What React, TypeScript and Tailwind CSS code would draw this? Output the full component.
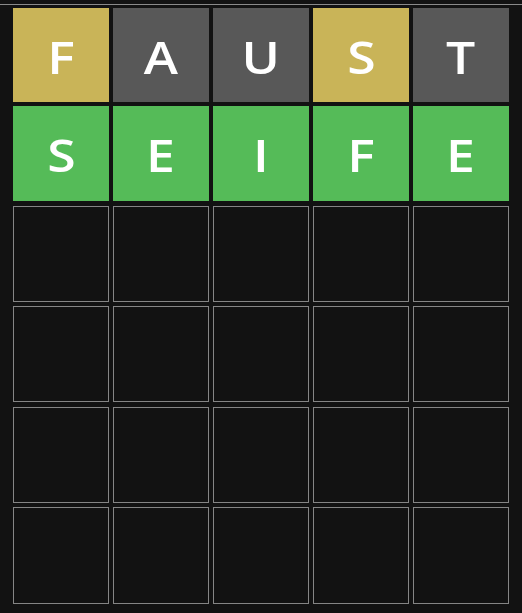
const rows: { letter: string; state: "present" | "absent" | "correct" }[][] = [
  [
    { letter: "F", state: "present" },
    { letter: "A", state: "absent" },
    { letter: "U", state: "absent" },
    { letter: "S", state: "present" },
    { letter: "T", state: "absent" },
  ],
  [
    { letter: "S", state: "correct" },
    { letter: "E", state: "correct" },
    { letter: "I", state: "correct" },
    { letter: "F", state: "correct" },
    { letter: "E", state: "correct" },
  ],
];

const stateClass = {
  present: "bg-[#c9b458]",
  absent: "bg-[#585858]",
  correct: "bg-[#55bb58]",
};

export default function App() {
  const cells = Array.from({ length: 30 }, (_, i) => {
    const r = Math.floor(i / 5);
    const c = i % 5;
    return rows[r]?.[c] ?? null;
  });

  return (
    <div className="w-[522px] h-[613px] bg-[#121212] overflow-hidden">
      <div className="pt-[4px]">
        <div className="h-px bg-[#8a8a8a]" />
      </div>
      <div className="grid grid-cols-[repeat(5,96px)] grid-rows-[94px_95px_96px_96px_96px_97px] gap-x-[4px] gap-y-[4.4px] pl-[13px] pt-[3px]">
        {cells.map((cell, i) =>
          cell ? (
            <div
              key={i}
              className={`flex items-center justify-center ${stateClass[cell.state]}`}
            >
              <span
                className="text-white text-[45px] font-semibold leading-none pt-[2px] scale-x-115"
                style={{ fontFamily: '"Open Sans", sans-serif' }}
              >
                {cell.letter}
              </span>
            </div>
          ) : (
            <div key={i} className="border border-[#858585] bg-[#121212]" />
          )
        )}
      </div>
    </div>
  );
}
